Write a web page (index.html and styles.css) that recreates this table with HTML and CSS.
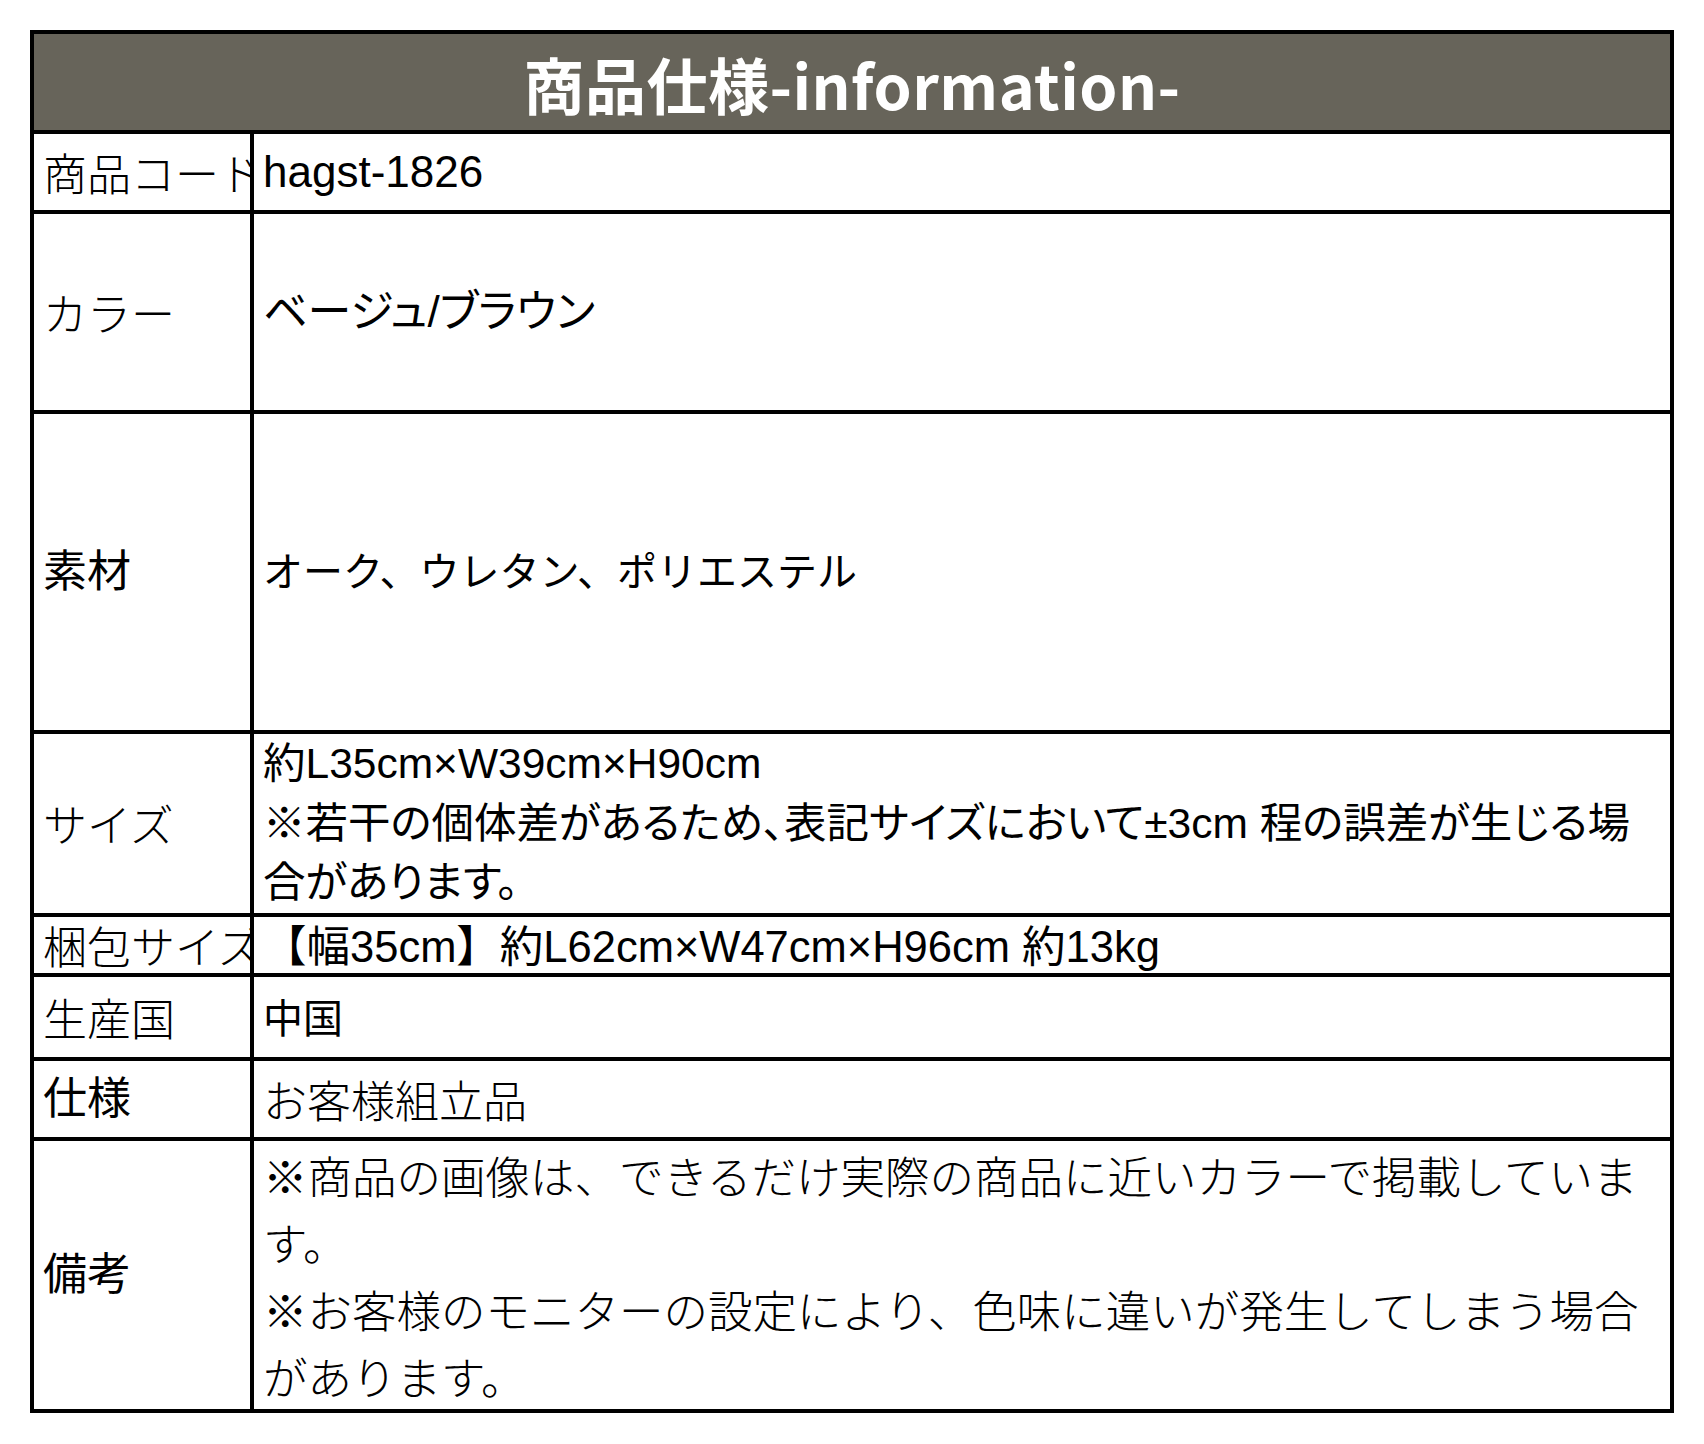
FILE: index.html
```html
<!DOCTYPE html>
<html lang="ja">
<head>
<meta charset="utf-8">
<title>商品仕様-information-</title>
<link rel="stylesheet" href="styles.css">
</head>
<body>
<div class="spec">
  <div class="spec-title">商品仕様-information-</div>

  <div class="label mincho">商品コード</div>
  <div class="value latin">hagst-1826</div>

  <div class="label mincho">カラー</div>
  <div class="value gothic prop">ベージュ/ブラウン</div>

  <div class="label gothic">素材</div>
  <div class="value gothic narrow">オーク、ウレタン、ポリエステル</div>

  <div class="label mincho">サイズ</div>
  <div class="value gothic prop lines-3">約L35cm×W39cm×H90cm<br>※若干の個体差があるため、表記サイズにおいて±3cm 程の誤差が生じる場<br>合があります。</div>

  <div class="label mincho">梱包サイズ</div>
  <div class="value gothic pack">【幅35cm】約L62cm×W47cm×H96cm 約13kg</div>

  <div class="label mincho">生産国</div>
  <div class="value gothic small">中国</div>

  <div class="label gothic">仕様</div>
  <div class="value mincho">お客様組立品</div>

  <div class="label gothic">備考</div>
  <div class="value mincho lines-4">※商品の画像は、できるだけ実際の商品に近いカラーで掲載していま<br>す。<br>※お客様のモニターの設定により、色味に違いが発生してしまう場合<br>があります。</div>
</div>
</body>
</html>
```

FILE: styles.css
```css
html, body {
  margin: 0;
  padding: 0;
  background: #ffffff;
}

body {
  padding: 30px;
  color: #000000;
  font-family: "Liberation Sans", "Noto Sans CJK JP", sans-serif;
}

.spec {
  width: 1644px;
  box-sizing: border-box;
  display: grid;
  grid-template-columns: 216px 1fr;
  grid-template-rows: 96px 76px 196px 316px 179px 56px 80px 76px 268px;
  gap: 4px;
  padding: 4px;
  background: #000000;
}

.spec-title {
  grid-column: 1 / -1;
  background: #67645a;
  color: #ffffff;
  display: flex;
  align-items: center;
  justify-content: center;
  font-family: "Noto Sans CJK JP", sans-serif;
  font-weight: 700;
  font-size: 61px;
  letter-spacing: 0.5px;
  padding-top: 2px;
}

.label,
.value {
  background: #ffffff;
  display: flex;
  align-items: center;
  font-size: 44px;
  line-height: 1.2;
  white-space: nowrap;
  overflow: hidden;
}

.label {
  padding-left: 9px;
}

.value {
  padding-left: 9px;
  padding-right: 4px;
}

.mincho {
  font-family: "Noto Sans CJK JP", sans-serif;
  font-weight: 300;
}

.gothic {
  font-family: "Liberation Sans", "Noto Sans CJK JP", sans-serif;
  font-weight: 400;
}

.latin {
  font-family: "Liberation Sans", "Noto Sans CJK JP", sans-serif;
}

.prop {
  font-feature-settings: "palt" 1;
}

.narrow {
  font-size: 40px;
}

.pack {
  font-size: 43.5px;
  padding-top: 4px;
}

.small {
  font-size: 40px;
  padding-top: 4px;
}

.lines-3 {
  font-size: 42.5px;
  line-height: 59.5px;
}

.lines-4 {
  font-size: 44.5px;
  line-height: 67px;
}
```
